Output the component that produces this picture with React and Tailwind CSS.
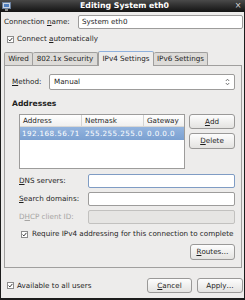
import React from "react";

function Check() {
  return (
    <span className="w-[7px] h-[7px] border border-[#8c8c8c] bg-white flex items-center justify-center shrink-0">
      <svg width="5" height="5" viewBox="0 0 5 5">
        <path d="M0.6 2.6 L1.9 3.9 L4.4 0.9" stroke="#333" strokeWidth="1" fill="none" />
      </svg>
    </span>
  );
}

function Btn({ children, w, h = "h-[15px]" }) {
  return (
    <div className={`${w} ${h} border border-[#9a9998] rounded-[3px] bg-gradient-to-b from-[#fdfdfd] to-[#e4e3e1] flex items-center justify-center shrink-0`}>
      {children}
    </div>
  );
}

function U({ children }) {
  return <span className="underline underline-offset-[1px] decoration-[0.5px]">{children}</span>;
}

export default function App() {
  return (
    <div className="w-[245px] h-[300px] overflow-hidden bg-[#1c1c1c] flex flex-col font-['DejaVu_Sans',sans-serif] text-[7.2px] text-[#1e1e1e] leading-none">
      {/* title bar */}
      <div className="h-[12px] flex items-center bg-gradient-to-b from-[#4a4a4a] to-[#141414] shrink-0">
        <div className="w-[12px] pl-[2px] flex items-center">
          <svg width="9" height="9" viewBox="0 0 9 9">
            <rect x="0.5" y="0.5" width="8" height="6" fill="#c9d4e2" stroke="#6a7f9c" />
            <rect x="2" y="2" width="5" height="3" fill="#4f7fc0" />
            <rect x="3" y="7" width="3" height="2" fill="#8a8a8a" />
          </svg>
        </div>
        <div className="flex-1 text-center text-white font-bold text-[7.8px] pl-[4px]">Editing System eth0</div>
        <div className="w-[12px] text-[#d8d8d8] text-[8px] text-center pr-[2px]">×</div>
      </div>

      {/* body */}
      <div className="flex-1 ml-[1px] mr-[1px] mb-[2px] bg-[#edeceb] flex flex-col">
        {/* connection name */}
        <div className="mt-[3px] h-[14px] flex items-center pl-[3px] pr-[1px] shrink-0">
          <span>Connection <U>n</U>ame:</span>
          <div className="ml-auto w-[165px] h-[14px] bg-white border border-[#9d9c9b] rounded-[2px] flex items-center pl-[3px]">
            System eth0
          </div>
        </div>

        {/* connect automatically */}
        <div className="mt-[4px] h-[12px] flex items-center pl-[6px] gap-[3px] shrink-0">
          <Check />
          <span>Connect <U>a</U>utomatically</span>
        </div>

        {/* tabs */}
        <div className="mt-[5px] h-[15px] flex items-end pl-[3px] shrink-0">
          <div className="h-[13px] w-[29px] bg-[#dddbd8] border border-b-0 border-[#a09f9e] rounded-t-[2px] flex items-center justify-center">Wired</div>
          <div className="h-[13px] w-[65px] bg-[#dddbd8] border border-b-0 border-l-0 border-[#a09f9e] rounded-t-[2px] flex items-center justify-center">802.1x Security</div>
          <div className="h-[15px] w-[56px] bg-[#edeceb] border border-b-0 border-[#a09f9e] border-t-[#8fb1dc] rounded-t-[2px] flex items-center justify-center relative top-[1px] z-10">IPv4 Settings</div>
          <div className="h-[13px] w-[54px] bg-[#dddbd8] border border-b-0 border-l-0 border-[#a09f9e] rounded-t-[2px] flex items-center justify-center">IPv6 Settings</div>
        </div>

        {/* panel */}
        <div className="ml-[3px] w-[238px] h-[203px] border border-[#a09f9e] flex flex-col shrink-0">
          {/* method */}
          <div className="mt-[8px] h-[16px] flex items-center pl-[7px] pr-[6px]">
            <span><U>M</U>ethod:</span>
            <div className="ml-auto w-[186px] h-[16px] bg-white border border-[#9d9c9b] rounded-[2px] flex items-center pl-[4px] pr-[4px]">
              <span>Manual</span>
              <svg className="ml-auto" width="5" height="8" viewBox="0 0 5 8">
                <path d="M0.8 3 L2.5 1.2 L4.2 3 M0.8 5 L2.5 6.8 L4.2 5" stroke="#555" strokeWidth="0.8" fill="none" />
              </svg>
            </div>
          </div>

          {/* addresses */}
          <div className="mt-[9px] h-[10px] flex items-center pl-[7px] font-bold text-[7.6px]">Addresses</div>

          <div className="mt-[5px] flex pl-[14px] pr-[6px] gap-[4px]">
            <div className="w-[166px] h-[55px] bg-white border border-[#9d9c9b] flex flex-col">
              <div className="h-[12px] flex items-center bg-gradient-to-b from-[#ffffff] to-[#f1f0ef] border-b border-[#d9d8d6]">
                <div className="w-[62px] h-full flex items-center pl-[3px] border-r border-[#d4d3d1]">Address</div>
                <div className="w-[62px] h-full flex items-center pl-[3px] border-r border-[#d4d3d1]">Netmask</div>
                <div className="flex-1 h-full flex items-center pl-[3px]">Gateway</div>
              </div>
              <div className="h-[13px] flex items-center bg-gradient-to-b from-[#93b4de] to-[#7ba0d1] text-white tracking-[0.4px]">
                <div className="w-[62px] pl-[2px] whitespace-nowrap">192.168.56.71</div>
                <div className="w-[62px] pl-[3px] whitespace-nowrap">255.255.255.0</div>
                <div className="flex-1 pl-[3px]">0.0.0.0</div>
              </div>
            </div>
            <div className="flex flex-col gap-[4px]">
              <Btn w="w-[46px]"><U>A</U>dd</Btn>
              <Btn w="w-[46px]" h="h-[16px]"><U>D</U>elete</Btn>
            </div>
          </div>

          {/* fields */}
          <div className="mt-[5px] h-[14px] flex items-center pl-[14px] pr-[6px]">
            <span><U>D</U>NS servers:</span>
            <div className="ml-auto w-[147px] h-[14px] bg-white border border-[#7f9cc4] rounded-[2px]"></div>
          </div>
          <div className="mt-[4px] h-[14px] flex items-center pl-[14px] pr-[6px]">
            <span><U>S</U>earch domains:</span>
            <div className="ml-auto w-[147px] h-[14px] bg-white border border-[#9d9c9b] rounded-[2px]"></div>
          </div>
          <div className="mt-[4px] h-[14px] flex items-center pl-[14px] pr-[6px] text-[#a6a5a3]">
            <span>D<U>H</U>CP client ID:</span>
            <div className="ml-auto w-[147px] h-[14px] bg-[#e6e5e3] border border-[#c2c1bf] rounded-[2px]"></div>
          </div>

          <div className="mt-[4px] h-[12px] flex items-center pl-[16px] gap-[4px]">
            <Check />
            <span>Require IPv4 addressing for this connection to complete</span>
          </div>

          <div className="mt-[4px] flex justify-end pr-[6px]">
            <Btn w="w-[45px]" h="h-[16px]"><U>R</U>outes…</Btn>
          </div>
        </div>

        {/* bottom */}
        <div className="mt-[10px] h-[15px] flex items-center pl-[6px] pr-[1px] shrink-0">
          <Check />
          <span className="ml-[3px]">Available to all users</span>
          <div className="ml-auto flex gap-[5px]">
            <Btn w="w-[45px]"><U>C</U>ancel</Btn>
            <Btn w="w-[46px]">Apply…</Btn>
          </div>
        </div>
      </div>
    </div>
  );
}
